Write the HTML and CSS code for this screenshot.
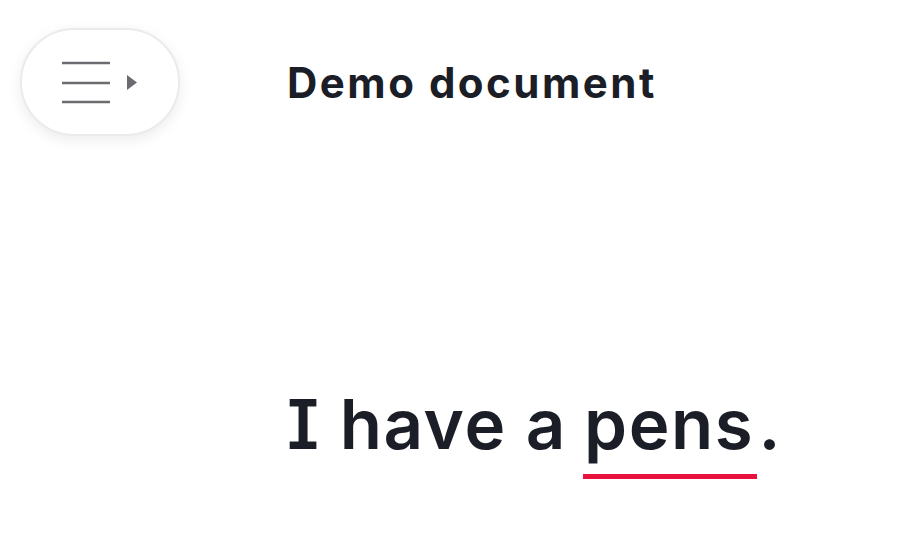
FILE: index.html
```html
<!DOCTYPE html>
<html lang="en">
<head>
    <meta charset="UTF-8">
    <meta name="viewport" content="width=device-width, initial-scale=1.0">
    <title>Demo document</title>
    <link rel="stylesheet" href="styles.css">
</head>
<body>
    <div class="page">
        <button class="menu-toggle" aria-label="Open menu">
            <svg width="76" height="50" viewBox="0 0 76 50">
                <line x1="0" y1="6" x2="48" y2="6" stroke="#6b6b70" stroke-width="2.6"/>
                <line x1="0" y1="26" x2="48" y2="26" stroke="#6b6b70" stroke-width="2.6"/>
                <line x1="0" y1="45" x2="48" y2="45" stroke="#6b6b70" stroke-width="2.6"/>
                <polygon points="65,18 75,25.5 65,33" fill="#6b6b70"/>
            </svg>
        </button>
        <div class="doc">
            <h1 class="doc-title">Demo document</h1>
            <p class="doc-text">I have a <span class="mistake">pens</span>.</p>
        </div>
    </div>
</body>
</html>
```

FILE: styles.css
```css
body {
    margin: 0;
    background-color: #ffffff;
    font-family: 'Inter', 'Liberation Sans', sans-serif;
    color: #1b1d27;
}
.page {
    display: flex;
    align-items: flex-start;
    padding: 28px 0 0 20px;
}
.menu-toggle {
    width: 160px;
    height: 108px;
    border-radius: 54px;
    border: 2px solid #ebebeb;
    background-color: #ffffff;
    box-shadow: 0 4px 14px rgba(0, 0, 0, 0.08);
    display: flex;
    align-items: center;
    justify-content: center;
    padding: 0;
    cursor: pointer;
    flex-shrink: 0;
}
.doc {
    margin-left: 107px;
}
.doc-title {
    font-size: 42px;
    font-weight: 700;
    margin: 30px 0 0 0;
    line-height: 50px;
    letter-spacing: 2.5px;
}
.doc-text {
    font-size: 69px;
    font-weight: 600;
    margin: 276px 0 0 0;
    line-height: 80px;
    letter-spacing: 1.6px;
    font-feature-settings: 'cv08';
}
/* red line under the wrong word */
.mistake {
    display: inline-block;
    padding: 0 3px 10px 1px;
    margin: 0 1px 0 -3px;
    border-bottom: 5px solid #e8123c;
}
```
